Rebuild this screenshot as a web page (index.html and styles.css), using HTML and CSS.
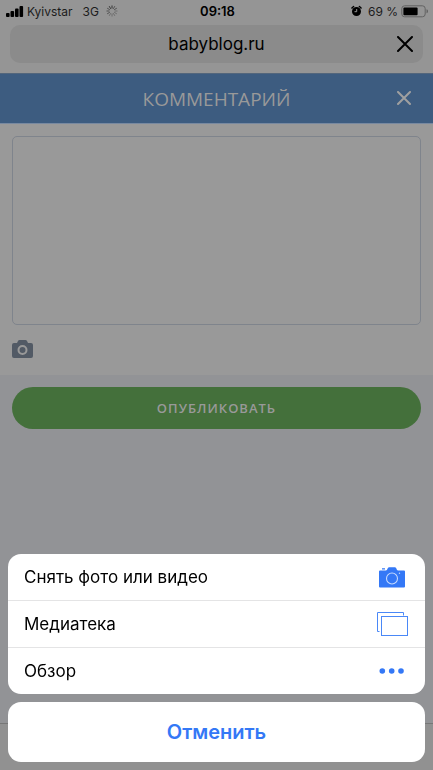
FILE: index.html
```html
<!DOCTYPE html>
<html lang="ru">
<head>
<meta charset="utf-8">
<meta name="viewport" content="width=device-width, initial-scale=1">
<title>Комментарий</title>
<link rel="stylesheet" href="styles.css">
</head>
<body>
<div class="screen">
  <header class="browser">
    <div class="status">
      <div class="status-side">
        <svg width="18" height="11" viewBox="0 0 18 11" aria-hidden="true"><rect x="0" y="7" width="3.6" height="4" rx="1"/><rect x="4.5" y="5" width="3.6" height="6" rx="1"/><rect x="9" y="2.5" width="3.6" height="8.5" rx="1"/><rect x="13.5" y="0" width="3.6" height="11" rx="1"/></svg>
        <span class="carrier">Kyivstar</span>
        <span class="network">3G</span>
        <svg width="12" height="12" viewBox="0 0 12 12" fill="none" stroke="#333" aria-hidden="true"><path d="M6 .5v3M3.200 1.200l1.500 2.600"/><path stroke="#505050" d="M1.200 3.200l2.600 1.500M.5 6h3M1.200 8.800l2.600-1.500"/><path stroke="#6c6c6c" d="M3.200 10.800l1.500-2.600M6 11.500v-3M8.800 10.800L7.300 8.200M10.800 8.800L8.200 7.300M11.500 6h-3"/><path stroke="#505050" d="M10.800 3.200L8.200 4.700M8.800 1.200L7.300 3.800"/></svg>
      </div>
      <time class="clock">09:18</time>
      <div class="status-side status-right">
        <svg width="11" height="12" viewBox="0 0 11 12" aria-hidden="true"><circle cx="5.5" cy="6.500" r="4.500"/><path d="M.9 3L2.600 1.500M10.100 3L8.400 1.500" stroke="#000" stroke-width="1.400" stroke-linecap="round"/><path d="M5.700 4v2.700H3.500" fill="none" stroke="#959595"/></svg>
        <span class="charge">69 %</span>
        <svg width="28" height="13" viewBox="0 0 28 13" aria-hidden="true"><rect x=".8" y=".8" width="23.4" height="11" rx="2.8" fill="none" stroke="#626262"/><rect x="2.4" y="2.4" width="14.2" height="7.8" rx="1"/><path d="M25.5 4.3c2 .5 2 3.5 0 4z" fill="#626262"/></svg>
      </div>
    </div>
    <div class="address">
      <span class="domain">babyblog.ru</span>
      <button class="icon-button" type="button" aria-label="Остановить загрузку"><svg width="16" height="16" viewBox="0 0 16 16"><path d="M1 1l14 14M15 1L1 15" stroke="#000" stroke-width="2" stroke-linecap="round"/></svg></button>
    </div>
  </header>
  <main class="page">
    <div class="titlebar">
      <h1 class="title">КОММЕНТАРИЙ</h1>
      <button class="icon-button" type="button" aria-label="Закрыть"><svg width="16" height="16" viewBox="0 0 16 16"><path d="M2 1l12 12M14 1L2 13" stroke="#a0a0a0" stroke-width="2" stroke-linecap="round"/></svg></button>
    </div>
    <form class="form">
      <div class="editor">
        <textarea class="comment" aria-label="Комментарий"></textarea>
        <button class="attach" type="button" aria-label="Добавить фото"><svg width="21" height="18" viewBox="0 0 21 18"><path fill="#525a65" fill-rule="evenodd" d="M2 3h3l1-2q.5-1 1.5-1h6Q14.500 0 15 1l1 2h3q2 0 2 2v11q0 2-2 2H2q-2 0-2-2V5q0-2 2-2zM10.500 5a5 5 0 1 0 0 10a5 5 0 1 0 0-10zM10.500 7a3 3 0 1 1 0 6a3 3 0 1 1 0-6z"/></svg></button>
      </div>
      <div class="actions"><button class="publish" type="button">ОПУБЛИКОВАТЬ</button></div>
    </form>
  </main>
  <footer class="toolbar"></footer>
</div>
<div class="sheet" role="dialog" aria-label="Выбор файла">
  <div class="options">
    <button class="option" type="button"><span>Снять фото или видео</span>
      <svg class="option-icon" viewBox="0 0 32 26" aria-hidden="true"><path fill="#3478f6" d="M4 6.500h6c1.500 0 1.500-3.200 3-3.200h6c1.500 0 1.500 3.200 3 3.200h6q1 0 1 1V22.500q0 1-1 1H4q-1 0-1-1V7.500q0-1 1-1zM6 4.300h3v1.200H6z"/><circle cx="16" cy="14.500" r="5.500" fill="none" stroke="#c6dafd" stroke-width="1.100"/><circle cx="23.500" cy="9.200" r=".7" fill="#c6dafd"/></svg>
    </button>
    <button class="option" type="button"><span>Медиатека</span>
      <svg class="option-icon" viewBox="0 0 32 26" fill="none" stroke="#4a88f7" aria-hidden="true"><path d="M3.500 20.500h-2v-19h26v3"/><rect x="5.500" y="5.500" width="26" height="19"/></svg>
    </button>
    <button class="option" type="button"><span>Обзор</span>
      <svg class="option-icon" viewBox="0 0 32 26" fill="#3478f6" aria-hidden="true"><circle cx="6.300" cy="13" r="2.800"/><circle cx="15.700" cy="13" r="2.800"/><circle cx="25" cy="13" r="2.800"/></svg>
    </button>
  </div>
  <button class="cancel" type="button">Отменить</button>
</div>
</body>
</html>
```
FILE: styles.css
```css
* {
  box-sizing: border-box;
}

body {
  margin: 0;
  font-family: Inter, "Liberation Sans", sans-serif;
  color: #000;
}

button {
  margin: 0;
  padding: 0;
  border: 0;
  background: none;
  color: inherit;
  font: inherit;
}

svg {
  display: block;
  flex: none;
}

.screen {
  display: flex;
  flex-direction: column;
  min-height: 100vh;
  background: #929396;
}

.browser {
  padding-bottom: 10px;
  background: #959595;
}

.status {
  display: flex;
  align-items: center;
  height: 22px;
  padding: 0 4px 0 6px;
  font-size: 12px;
}

.status-side {
  display: flex;
  flex: 1;
  align-items: center;
  color: #1c1c1c;
}

.status-right {
  justify-content: flex-end;
}

.carrier {
  margin: 0 10px 0 3px;
}

.network {
  margin-right: 7px;
}

.charge {
  margin: 0 3px 0 6px;
}

.clock {
  font-size: 13px;
  font-weight: 600;
}

.address {
  display: flex;
  align-items: center;
  height: 38px;
  margin: 3px 10px 0;
  padding: 0 10px 0 26px;
  border-radius: 10px;
  background: #8b8b8b;
}

.domain {
  flex: 1;
  text-align: center;
  font-size: 17px;
}

.icon-button {
  display: grid;
  place-items: center;
  width: 16px;
  height: 24px;
}

.page {
  flex: 1;
  font-family: "Open Sans", sans-serif;
}

.titlebar {
  display: flex;
  align-items: center;
  height: 51px;
  padding: 0 21px 0 37px;
  border-top: 1px solid #53667c;
  border-bottom: 1px solid #7889a0;
  background: #3d5c80;
}

.title {
  flex: 1;
  margin: 0;
  color: #999;
  font-size: 19px;
  font-weight: 400;
  text-align: center;
}

.editor {
  padding: 12px 12px 17px;
  background: #999;
}

.comment {
  display: block;
  width: 100%;
  height: 189px;
  padding: 10px;
  border: 1px solid #7f848c;
  border-radius: 5px;
  background: transparent;
  font: inherit;
  resize: none;
}

.attach {
  display: block;
  margin-top: 15px;
}

.actions {
  padding: 12px;
}

.publish {
  width: 100%;
  height: 42px;
  border-radius: 21px;
  background: #44703b;
  color: #999;
  font-size: 13px;
  font-weight: 600;
  letter-spacing: 1px;
}

.toolbar {
  height: 47px;
  border-top: 1px solid #777;
  background: #919191;
}

.sheet {
  position: fixed;
  right: 8px;
  bottom: 8px;
  left: 8px;
  display: grid;
  gap: 8px;
}

.options {
  overflow: hidden;
  border-radius: 13px;
  background: #fff;
}

.option {
  display: flex;
  align-items: center;
  justify-content: space-between;
  width: 100%;
  height: 46px;
  padding: 0 17px 0 16px;
  font-size: 17px;
  text-align: left;
}

.option + .option {
  height: 47px;
  border-top: 1px solid #e4e4e5;
}

.option-icon {
  width: 32px;
  height: 26px;
}

.cancel {
  height: 60px;
  border-radius: 13px;
  background: #fff;
  color: #3478f6;
  font-size: 20px;
  font-weight: 600;
}
```
